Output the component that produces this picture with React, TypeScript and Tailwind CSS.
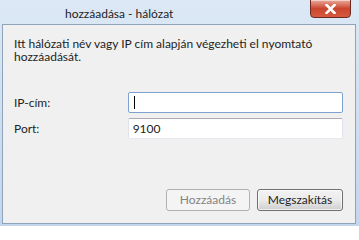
export default function App() {
  const font = { fontFamily: 'Lato, "Liberation Sans", sans-serif' };

  return (
    <div
      className="w-[359px] h-[226px] flex flex-col bg-gradient-to-b from-[#dce8f5] via-[#cfdff0] to-[#c3d6ec] text-[12px] text-[#1e1e1e] select-none"
      style={font}
    >
      {/* Title bar */}
      <div className="relative h-[24px] shrink-0">
        <div className="absolute left-[65px] top-[6px] text-[12px] leading-[15px] text-[#1e1e1e]">
          hozzáadása - hálózat
        </div>
        <div className="absolute left-[310px] top-[-1px] w-[41px] h-[19px] rounded-b-[4px] border border-[#6e2a20] bg-gradient-to-b from-[#e9a99a] via-[#c9452f] to-[#d65a3d] flex items-center justify-center shadow-[inset_0_1px_0_rgba(255,255,255,0.5)]">
          <svg width="11" height="10" viewBox="0 0 11 10">
            <path d="M1.5 1 L9.5 9 M9.5 1 L1.5 9" stroke="#ffffff" strokeWidth="2.6" strokeLinecap="square" />
          </svg>
        </div>
      </div>

      {/* Client area */}
      <div className="flex-1 ml-[2px] mr-[3px] mb-[2px] border border-[#8fa3ba] bg-[#f0f0f0] flex flex-col pl-[11px] pr-[12px] pt-[12px] pb-[12px]">
        <p className="leading-[13px] w-[300px]">
          Itt hálózati név vagy IP cím alapján végezheti el nyomtató hozzáadását.
        </p>

        <div className="mt-[29px] flex flex-col gap-[5px]">
          <div className="flex items-center">
            <span className="w-[114px]">IP-cím:</span>
            <div className="w-[216px] h-[21px] border border-[#7da2ce] bg-white rounded-[2px] flex items-center pl-[5px]">
              <span className="w-px h-[13px] bg-black" />
            </div>
          </div>
          <div className="flex items-center">
            <span className="w-[114px]">Port:</span>
            <div className="w-[216px] h-[21px] border border-[#abadb3] border-b-[#e3e9ef] border-x-[#e2e3ea] bg-white rounded-[2px] flex items-center pl-[4px]">
              9100
            </div>
          </div>
        </div>

        <div className="mt-auto flex justify-end gap-[7px]">
          <button
            className="w-[84px] h-[22px] rounded-[3px] border border-[#adb2b5] bg-[#f4f4f4] text-[#838383] text-[12px]"
            style={font}
          >
            Hozzáadás
          </button>
          <button
            className="w-[86px] h-[22px] rounded-[3px] border border-[#707070] bg-gradient-to-b from-[#f2f2f2] via-[#ebebeb] to-[#cfcfcf] text-[#1e1e1e] text-[12px] shadow-[inset_0_0_0_1px_rgba(255,255,255,0.7)]"
            style={font}
          >
            Megszakítás
          </button>
        </div>
      </div>
    </div>
  );
}
